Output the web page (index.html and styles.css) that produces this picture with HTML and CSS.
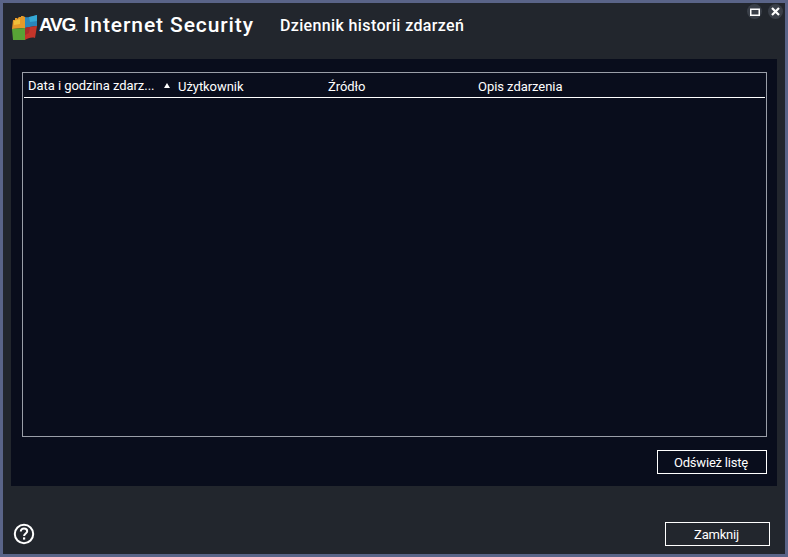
FILE: index.html
```html
<!DOCTYPE html>
<html lang="pl">
<head>
  <meta charset="UTF-8" />
  <title>AVG Internet Security</title>
  <link rel="stylesheet" href="styles.css">
</head>
<body>
  <div class="window">

    <!-- TITLE BAR -->
    <div class="titlebar">
      <svg class="logo" width="26" height="26" viewBox="0 0 26 26">
        <path d="M1 5 L3 5 L3 3 L5 3 L5 4 L7 2 L9 2 L9 1 L11 1 L13 2 L13 13 L0 14 Z" fill="#e59a2a"/>
        <path d="M2 6 L8 4 L8 9 L2 10 Z" fill="#efc03a"/>
        <path d="M13 2 C17 3 21 1 25 0 L25 11 C21 11 17 12 13 13 Z" fill="#2a86bc"/>
        <path d="M17 2 L25 0 L25 6 L18 7 Z" fill="#35a9d6"/>
        <path d="M0 14 L13 13 L13 25 L1 25 Z" fill="#58a336"/>
        <path d="M13 13 C17 12 21 11 25 11 L23 23 C20 22 16 23 13 25 Z" fill="#c4352a"/>
        <path d="M13 13 L18 12 L17 18 L13 20 Z" fill="#a92b2a"/>
      </svg>
      <span class="brand-avg">AVG<span class="brand-dot">.</span></span>
      <span class="brand-name">Internet Security</span>
      <span class="page-title">Dziennik historii zdarzeń</span>

      <div class="win-buttons">
        <span class="win-btn">
          <svg width="10" height="8" viewBox="0 0 10 8"><path d="M0.75 1.25 H9.25 V7.25 H0.75 Z" fill="none" stroke="#fff" stroke-width="1.5"/></svg>
        </span>
        <span class="win-btn">
          <svg width="9" height="9" viewBox="0 0 9 9"><path d="M1 1 L8 8 M8 1 L1 8" stroke="#fff" stroke-width="2.2"/></svg>
        </span>
      </div>
    </div>

    <!-- PANEL -->
    <div class="panel">
      <div class="log-table">
        <div class="log-head">
          <div class="col col-date">Data i godzina zdarz...<span class="sort-arrow"></span></div>
          <div class="col">Użytkownik</div>
          <div class="col">Źródło</div>
          <div class="col">Opis zdarzenia</div>
        </div>
      </div>
      <div class="panel-actions">
        <button class="btn btn-refresh">Odśwież listę</button>
      </div>
    </div>

    <!-- FOOTER -->
    <div class="footer">
      <svg class="help" width="22" height="22" viewBox="0 0 22 22">
        <circle cx="11" cy="11" r="9.2" fill="none" stroke="#fff" stroke-width="2"/>
        <path d="M7.8 8.6 C7.8 6.6 9.2 5.6 11 5.6 C12.9 5.6 14.2 6.7 14.2 8.3 C14.2 10.4 11.1 10.6 11.1 13" fill="none" stroke="#fff" stroke-width="2"/>
        <rect x="10" y="14.4" width="2.2" height="2.2" fill="#fff"/>
      </svg>
      <button class="btn btn-close">Zamknij</button>
    </div>

  </div>
</body>
</html>
```

FILE: styles.css
```css
* {
  box-sizing: border-box;
}
body {
  margin: 0;
  background: #5a6488;
  font-family: Roboto, 'Liberation Sans', sans-serif;
  color: #fff;
}

.window {
  display: flex;
  flex-direction: column;
  width: 788px;
  height: 557px;
  border: 3px solid #5a6488;
  background: #22262d;
}

/* Title bar */
.titlebar {
  display: flex;
  align-items: center;
  height: 56px;
  padding: 0 0 12px 9px;
  position: relative;
  flex-shrink: 0;
}

.logo {
  flex-shrink: 0;
  margin-top: 6px;
}

.brand-avg {
  margin-left: 1px;
  font-family: 'Liberation Sans', sans-serif;
  font-size: 19px;
  font-weight: bold;
  letter-spacing: -1.2px;
}

.brand-dot {
  font-size: 9px;
}

.brand-name {
  margin-left: 7px;
  font-size: 21px;
  font-weight: 500;
  letter-spacing: 0.9px;
}

.page-title {
  margin-left: 26px;
  font-size: 16px;
  font-weight: 500;
  letter-spacing: 0.37px;
}

.win-buttons {
  position: absolute;
  top: 1px;
  right: 2px;
  display: flex;
  gap: 6px;
}

.win-btn {
  display: flex;
  justify-content: center;
  align-items: center;
  width: 15px;
  height: 15px;
  border-radius: 50%;
  background: #3a3f48;
}

/* Panel */
.panel {
  display: flex;
  flex-direction: column;
  height: 427px;
  margin: 0 8px;
  padding: 13px 10px 12px 11px;
  background: #090d1c;
}

.log-table {
  height: 365px;
  padding: 0 1px;
  border: 1px solid #9a9ea8;
}

.log-head {
  display: flex;
  height: 25px;
  border-bottom: 1px solid #fff;
  font-size: 13px;
  line-height: 27px;
  letter-spacing: -0.05px;
}

.col {
  width: 150px;
  padding-left: 4px;
}

.col-date {
  display: flex;
  align-items: center;
  position: relative;
}

.sort-arrow {
  position: absolute;
  left: 140px;
  top: 10px;
  border: 3.5px solid transparent;
  border-top: 0;
  border-bottom: 5px solid #fff;
}

.panel-actions {
  display: flex;
  justify-content: flex-end;
  margin-top: 13px;
}

.btn {
  height: 24px;
  padding: 0 2px 0 0;
  background: transparent;
  border: 1px solid #fff;
  color: #fff;
  font-family: Roboto, 'Liberation Sans', sans-serif;
  font-size: 13px;
  letter-spacing: -0.2px;
}

.btn-refresh {
  width: 110px;
}

/* Footer */
.footer {
  display: flex;
  flex: 1;
  justify-content: space-between;
  align-items: flex-start;
  padding: 36px 15px 0 10px;
}

.help {
  margin-top: 1px;
}

.btn-close {
  width: 105px;
}
```
